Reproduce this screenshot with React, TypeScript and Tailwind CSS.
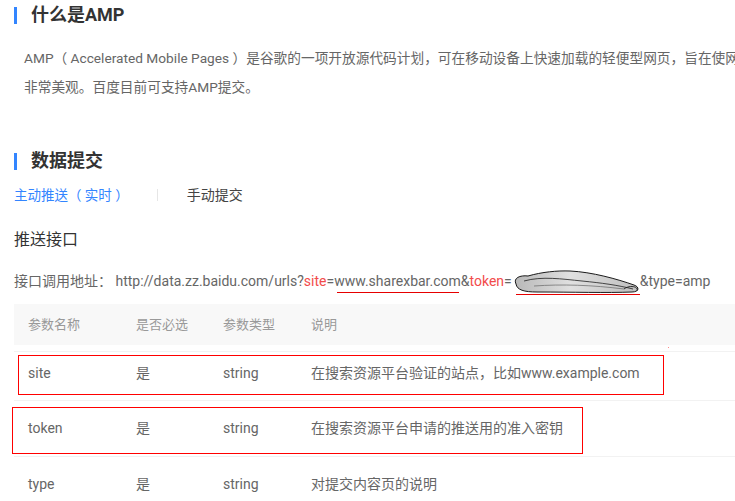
import React from "react";

function Heading({ children }: { children: React.ReactNode }) {
  return (
    <div className="flex items-center h-[24px]">
      <div className="w-[3px] h-[17px] bg-[#3385ff]" />
      <div className="ml-[14px] text-[18px] font-bold text-[#333] leading-[24px]">{children}</div>
    </div>
  );
}

function Scribble() {
  return (
    <svg width="128" height="24" viewBox="0 0 128 24" className="inline-block align-middle -my-[6px]">
      <defs>
        <linearGradient id="g" x1="0" x2="1" y1="0" y2="0">
          <stop offset="0" stopColor="#b8b8b8" />
          <stop offset="0.45" stopColor="#e0e0e0" />
          <stop offset="1" stopColor="#bfbfbf" />
        </linearGradient>
      </defs>
      <path
        d="M4 14 C 1 8, 8 5, 16 6 C 30 2, 45 0.5, 58 1 C 80 2, 105 9, 122 15 C 128 17, 127 22, 120 22 C 95 23, 60 22, 25 22 C 12 22, 5 20, 4 14 Z"
        fill="url(#g)"
        stroke="#1a1a1a"
        strokeWidth="1"
      />
      <path d="M12 11 C 30 6, 50 9, 70 11 C 90 13, 105 15, 121 19" fill="none" stroke="#333" strokeWidth="0.9" />
      <path d="M22 16 C 50 14, 80 15, 112 19" fill="none" stroke="#666" strokeWidth="0.7" />
      <path d="M112 19 C 117 15, 127 16, 125 21" fill="none" stroke="#1a1a1a" strokeWidth="0.9" />
    </svg>
  );
}

const rows = [
  { name: "site", req: "是", type: "string", desc: "在搜索资源平台验证的站点，比如www.example.com", h: "h-[49px] pb-[5px]" },
  { name: "token", req: "是", type: "string", desc: "在搜索资源平台申请的推送用的准入密钥", h: "h-[56px]" },
  { name: "type", req: "是", type: "string", desc: "对提交内容页的说明", h: "h-[55px]" },
];

export default function App() {
  return (
    <div className="relative w-[735px] h-[501px] overflow-hidden bg-white font-['Roboto','Noto_Sans_CJK_SC',sans-serif] pl-[14px] pt-[3px]">
      <Heading>什么是AMP</Heading>
      <div className="ml-[10px] mt-[17px] text-[13.7px] leading-[29px] text-[#666] whitespace-nowrap">
        <div>AMP（ Accelerated Mobile Pages ）是谷歌的一项开放源代码计划，可在移动设备上快速加载的轻便型网页，旨在使网页在移动设备上快速加载并且看起来非常美观。</div>
        <div>非常美观。百度目前可支持AMP提交。</div>
      </div>
      <div className="mt-[47px]">
        <Heading>数据提交</Heading>
      </div>
      <div className="mt-[12px] flex items-center h-[20px] whitespace-nowrap">
        <span className="text-[13.5px] text-[#3385ff]">主动推送（ 实时 ）</span>
        <span className="ml-[28px] w-px h-[12px] bg-[#e6e6e6]" />
        <span className="ml-[29px] text-[14px] text-[#444]">手动提交</span>
      </div>
      <div className="mt-[23px] text-[16px] leading-[24px] text-[#333]">推送接口</div>
      <div className="mt-[19px] h-[20px] leading-[20px] text-[14px] text-[#666] whitespace-nowrap">
        接口调用地址： http://data.zz.baidu.com/urls?<span className="text-[#f24b4b]">site</span>=
        <span className="relative">
          www.sharexbar.com
          <span className="absolute left-[3px] right-[2px] -bottom-[4px] h-px bg-[#e60000]" />
        </span>
        &amp;<span className="text-[#f24b4b]">token</span>=
        <span className="relative inline-block">
          <Scribble />
          <span className="absolute left-[4px] right-0 -bottom-[4px] h-px bg-[#e60000]" />
        </span>
        &amp;type=amp
      </div>
      <div className="mt-[13px] w-[760px]">
        <div className="flex items-center h-[41px] bg-[#f8f8f8] text-[13px] text-[#999]">
          <div className="w-[122px] pl-[14px]">参数名称</div>
          <div className="w-[87px]">是否必选</div>
          <div className="w-[88px]">参数类型</div>
          <div>说明</div>
        </div>
        <div className="mt-[6px]">
          {rows.map((r) => (
            <div key={r.name} className={`flex items-center border-t border-[#f2f2f2] text-[14px] text-[#666] ${r.h}`}>
              <div className="w-[122px] pl-[14px]">{r.name}</div>
              <div className="w-[87px]">{r.req}</div>
              <div className="w-[88px]">{r.type}</div>
              <div className="whitespace-nowrap">{r.desc}</div>
            </div>
          ))}
        </div>
      </div>
      <div className="absolute left-[18px] top-[355px] w-[646px] h-[40px] border border-[#ff0000]" />
      <div className="absolute left-[12px] top-[407px] w-[571px] h-[47px] border border-[#ff0000]" />
      <div className="absolute left-[668px] top-[347px] w-px h-px bg-[#ff8a8a]" />
    </div>
  );
}
